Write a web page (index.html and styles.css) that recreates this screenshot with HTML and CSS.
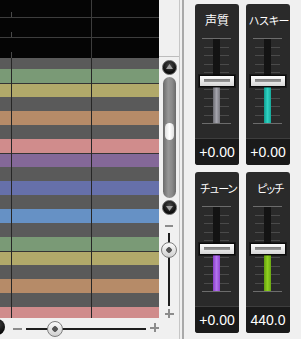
FILE: index.html
```html
<!DOCTYPE html>
<html lang="ja">
<head>
<meta charset="utf-8">
<link rel="stylesheet" href="styles.css">
</head>
<body>
<div class="app">
  <div class="roll-col">
    <div class="roll">
      <div class="ruler"></div>
      <div class="keys">
        <div class="row k-gray first"></div>
        <div class="row k-green"></div>
        <div class="row k-yellow sep"></div>
        <div class="row k-gray"></div>
        <div class="row k-orange"></div>
        <div class="row k-gray"></div>
        <div class="row k-pink"></div>
        <div class="row k-purple sep"></div>
        <div class="row k-gray"></div>
        <div class="row k-indigo"></div>
        <div class="row k-gray"></div>
        <div class="row k-blue"></div>
        <div class="row k-gray"></div>
        <div class="row k-green"></div>
        <div class="row k-yellow sep"></div>
        <div class="row k-gray"></div>
        <div class="row k-orange"></div>
        <div class="row k-gray"></div>
        <div class="row k-pink last"></div>
      </div>
    </div>
    <div class="hbar">
      <span class="hbtn"></span>
      <span class="minus"></span>
      <div class="htrack"><span class="knob hknob"></span></div>
      <span class="plus"></span>
    </div>
  </div>
  <div class="vcol">
    <div class="vtop"></div>
    <div class="sbtn up"><svg width="13" height="13" viewBox="0 0 13 13"><polygon points="6.5,3 10,8 3,8" fill="#a0a0a0"/></svg></div>
    <div class="strack"><div class="sthumb"></div></div>
    <div class="sbtn down"><svg width="13" height="13" viewBox="0 0 13 13"><polygon points="3,5 10,5 6.5,10" fill="#a0a0a0"/></svg></div>
    <span class="minus vminus"></span>
    <div class="vtrack"><span class="knob vknob"></span></div>
    <span class="plus vplus"></span>
  </div>
  <div class="split"></div>
  <div class="panels">
    <div class="panel">
      <div class="title">声質</div>
      <div class="fader">
        <div class="ticks"><i class="tick end"></i><i class="tick"></i><i class="tick"></i><i class="tick"></i><i class="tick"></i><i class="tick"></i><i class="tick"></i><i class="tick"></i><i class="tick"></i><i class="tick"></i><i class="tick end"></i></div>
        <div class="bar bar-gray"></div>
        <div class="fknob"></div>
      </div>
      <div class="value">+0.00</div>
    </div>
    <div class="panel">
      <div class="title t-husky">ハスキー</div>
      <div class="fader">
        <div class="ticks"><i class="tick end"></i><i class="tick"></i><i class="tick"></i><i class="tick"></i><i class="tick"></i><i class="tick"></i><i class="tick"></i><i class="tick"></i><i class="tick"></i><i class="tick"></i><i class="tick end"></i></div>
        <div class="bar bar-teal"></div>
        <div class="fknob"></div>
      </div>
      <div class="value">+0.00</div>
    </div>
    <div class="panel">
      <div class="title t-tune">チューン</div>
      <div class="fader">
        <div class="ticks"><i class="tick end"></i><i class="tick"></i><i class="tick"></i><i class="tick"></i><i class="tick"></i><i class="tick"></i><i class="tick"></i><i class="tick"></i><i class="tick"></i><i class="tick"></i><i class="tick end"></i></div>
        <div class="bar bar-purple"></div>
        <div class="fknob"></div>
      </div>
      <div class="value">+0.00</div>
    </div>
    <div class="panel">
      <div class="title t-pitch">ピッチ</div>
      <div class="fader">
        <div class="ticks"><i class="tick end"></i><i class="tick"></i><i class="tick"></i><i class="tick"></i><i class="tick"></i><i class="tick"></i><i class="tick"></i><i class="tick"></i><i class="tick"></i><i class="tick"></i><i class="tick end"></i></div>
        <div class="bar bar-green"></div>
        <div class="fknob"></div>
      </div>
      <div class="value">440.0</div>
    </div>
  </div>
</div>
</body>
</html>
```
FILE: styles.css
```css
* { box-sizing: border-box; }
html, body { margin: 0; padding: 0; }
body {
  width: 301px;
  height: 339px;
  overflow: hidden;
  background: #f0f0f0;
  font-family: "Liberation Sans", Arial, sans-serif;
}
.app {
  display: flex;
  height: 339px;
}
.roll-col {
  width: 159px;
  flex: none;
  display: flex;
  flex-direction: column;
}
.roll {
  height: 318px;
  display: flex;
  flex-direction: column;
  overflow: hidden;
}
.ruler {
  height: 58px;
  flex: none;
  background-color: #050505;
  background-image:
    linear-gradient(#3d3d3d, #3d3d3d),
    linear-gradient(#3d3d3d, #3d3d3d),
    linear-gradient(#4a4a4a, #4a4a4a),
    linear-gradient(#4a4a4a, #4a4a4a),
    linear-gradient(#4a4a4a, #4a4a4a),
    linear-gradient(#3d3d3d, #3d3d3d);
  background-repeat: no-repeat;
  background-size: 100% 1px, 100% 1px, 1px 5px, 1px 5px, 1px 6px, 1px 100%;
  background-position: 0 17px, 0 37px, 11px 12px, 11px 32px, 11px 52px, 91px 0;
}
.keys {
  position: relative;
  flex: 1;
  display: flex;
  flex-direction: column;
}
.keys::after {
  content: "";
  position: absolute;
  inset: 0;
  background-image:
    linear-gradient(#262626, #262626),
    linear-gradient(#262626, #262626);
  background-repeat: no-repeat;
  background-size: 1px 100%, 1px 100%;
  background-position: 11px 0, 91px 0;
}
.row { height: 14px; flex: none; }
.row.first, .row.last { height: 11px; }
.row.sep { border-top: 1px solid #343434; }
.k-gray { background: #5a5a5a; }
.k-green { background: #7a9a76; }
.k-yellow { background: #b1a96a; }
.k-orange { background: #b68b68; }
.k-pink { background: #d08c8c; }
.k-purple { background: #846898; }
.k-indigo { background: #6670aa; }
.k-blue { background: #6691c5; }

.hbar {
  height: 21px;
  display: flex;
  align-items: center;
}
.hbtn {
  flex: none;
  width: 16px;
  height: 16px;
  margin-left: -11px;
  margin-top: -3px;
  border-radius: 50%;
  background: radial-gradient(circle at 60% 35%, #3a3a3a, #000 70%);
}
.minus {
  flex: none;
  width: 9px;
  height: 2px;
  background: #8c8c8c;
}
.hbar .minus { margin-left: 8px; }
.plus {
  flex: none;
  width: 9px;
  height: 9px;
  background:
    linear-gradient(#8c8c8c, #8c8c8c) 0 3.5px / 9px 2px no-repeat,
    linear-gradient(#8c8c8c, #8c8c8c) 3.5px 0 / 2px 9px no-repeat;
}
.hbar .plus { margin-left: 4px; margin-top: -2px; }
.htrack {
  position: relative;
  flex: none;
  margin-left: 4px;
  width: 120px;
  height: 2px;
  background: #1e1e1e;
}
.knob {
  position: absolute;
  width: 16px;
  height: 16px;
  border-radius: 50%;
  border: 1px solid #7d7d7d;
  background:
    radial-gradient(circle, #555 0 2.5px, transparent 3px),
    linear-gradient(#fbfbfb, #cfcfcf);
}
.hknob { left: 21px; top: -7px; }

.vcol {
  width: 21px;
  flex: none;
  border-right: 1px solid #c6c6c6;
  display: flex;
  flex-direction: column;
  align-items: center;
}
.vtop {
  align-self: stretch;
  height: 57px;
  flex: none;
  border-bottom: 1px solid #bcbcbc;
}
.sbtn {
  flex: none;
  width: 15px;
  height: 15px;
  border-radius: 50%;
  border: 1px solid #5e5e5e;
  background: radial-gradient(circle at 50% 35%, #4a4a4a 0, #111 60%, #000 100%);
  display: flex;
  align-items: center;
  justify-content: center;
}
.sbtn.up { margin-top: 3px; }
.sbtn.down { margin-top: 2px; }
.sbtn svg { display: block; }
.strack {
  flex: none;
  margin-top: 2px;
  width: 13px;
  height: 121px;
  border-radius: 7px;
  background: linear-gradient(to right, #6a6a6a, #969696 40%, #8a8a8a 70%, #6a6a6a);
  display: flex;
  flex-direction: column;
  align-items: center;
}
.sthumb {
  margin-top: 46px;
  width: 9px;
  height: 17px;
  border-radius: 5px;
  background: linear-gradient(to right, #e2e2e2, #ffffff 50%, #e0e0e0);
}
.vminus { margin-top: 10px; width: 8px; }
.vtrack {
  position: relative;
  flex: none;
  margin-top: 6px;
  width: 2px;
  height: 73px;
  background: #1e1e1e;
}
.vknob { left: -7px; top: 9px; }
.vplus { margin-top: 3px; }

.split {
  width: 4px;
  flex: none;
  border-right: 2px solid #a9a9a9;
}
.panels {
  width: 116px;
  flex: none;
  padding: 4px 0 0 11px;
  display: grid;
  grid-template-columns: 44px 44px;
  grid-template-rows: 161px 161px;
  gap: 7px;
  align-content: start;
}
.panel {
  background: #2a2a2a;
  border-radius: 3px;
  display: flex;
  flex-direction: column;
}
.title {
  height: 34px;
  line-height: 32px;
  text-align: center;
  color: #ffffff;
  font-family: "Noto Sans CJK JP", "Noto Sans", sans-serif;
  font-size: 12px;
  white-space: nowrap;
}
.t-husky { font-size: 11px; letter-spacing: -1px; padding-left: 1px; }
.t-tune { font-size: 11px; letter-spacing: -1.75px; padding-left: 2px; }
.t-pitch { font-size: 11px; letter-spacing: -2.5px; padding-left: 3px; }
.fader {
  position: relative;
  margin-left: 7px;
  width: 29px;
  height: 86px;
}
.fader::before {
  content: "";
  position: absolute;
  left: 11px;
  top: 0;
  width: 7px;
  height: 86px;
  background: #131313;
}
.ticks {
  position: relative;
  height: 86px;
  display: flex;
  flex-direction: column;
  justify-content: space-between;
}
.tick {
  display: block;
  height: 1px;
  background: linear-gradient(to right, transparent 2px, #4a4a4a 2px 11px, transparent 11px 18px, #4a4a4a 18px 27px, transparent 27px);
}
.tick.end { background: #6c6c6c; }
.bar {
  position: absolute;
  left: 11px;
  width: 7px;
  top: 43px;
  bottom: 1px;
}
.bar-gray { background: linear-gradient(to right, #6c6c72, #a4a4ac 50%, #76767c); }
.bar-teal { background: linear-gradient(to right, #0f9d90, #2fd2c2 50%, #16a89a); }
.bar-purple { background: linear-gradient(to right, #8a3ec8, #b374ee 50%, #9044d0); }
.bar-green { background: linear-gradient(to right, #63a00e, #90d020 50%, #6aa812); }
.fknob {
  position: absolute;
  left: -3px;
  top: 37px;
  width: 36px;
  height: 12px;
  border: 1px solid #0a0a0a;
  background: linear-gradient(#fdfdfd, #d6d6d6);
  box-shadow: 0 0 0 1px rgba(0,0,0,0.4);
}
.fknob::after {
  content: "";
  position: absolute;
  left: 4px;
  right: 4px;
  top: 3px;
  height: 3px;
  background: linear-gradient(#7a7a7a, #9a9a9a);
}
.value {
  margin-top: 14px;
  height: 27px;
  border-top: 1px solid #3e3e3e;
  background: #1a1a1a;
  border-radius: 0 0 3px 3px;
  color: #ffffff;
  text-align: center;
  line-height: 26px;
  font-size: 14px;
}
```
